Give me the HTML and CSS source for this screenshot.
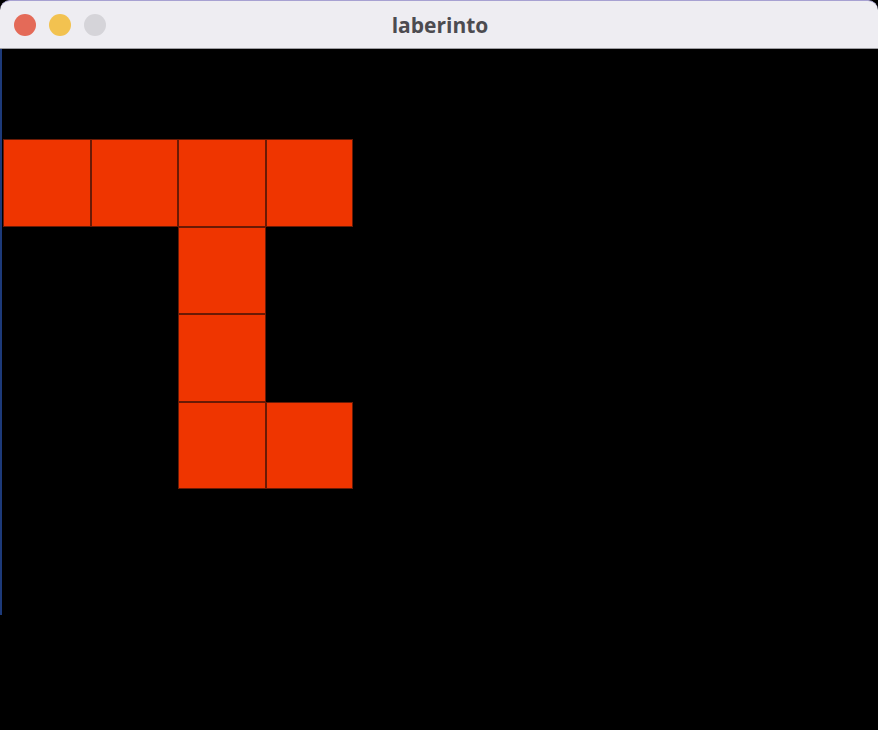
FILE: index.html
```html
<!DOCTYPE html>
<html>
<head>
<meta charset="utf-8">
<title>laberinto</title>
<link rel="stylesheet" href="styles.css">
</head>
<body>
<div class="window">
  <div class="titlebar">
    <div class="lights">
      <span class="light red"></span>
      <span class="light yellow"></span>
      <span class="light gray"></span>
    </div>
    <div class="title">laberinto</div>
  </div>
  <div class="canvas">
    <div class="maze">
      <div class="cell wall"></div><div class="cell wall"></div><div class="cell wall"></div><div class="cell wall"></div>
      <div class="cell"></div><div class="cell"></div><div class="cell wall"></div><div class="cell"></div>
      <div class="cell"></div><div class="cell"></div><div class="cell wall"></div><div class="cell"></div>
      <div class="cell"></div><div class="cell"></div><div class="cell wall"></div><div class="cell wall"></div>
    </div>
  </div>
</div>
</body>
</html>
```
FILE: styles.css
```css
html, body {
  margin: 0;
  padding: 0;
  background: #000;
  width: 878px;
  height: 730px;
  overflow: hidden;
}
.window {
  display: flex;
  flex-direction: column;
  width: 878px;
  height: 730px;
  background: #000;
}
.titlebar {
  position: relative;
  height: 47px;
  flex: none;
  background: #eeedf2;
  border-top: 1px solid #a7a1d2;
  border-bottom: 1px solid #9d9da2;
  border-radius: 10px 10px 0 0;
  display: flex;
  align-items: center;
  justify-content: center;
}
.lights {
  position: absolute;
  left: 14px;
  top: 13px;
  display: flex;
  gap: 13px;
}
.light {
  width: 22px;
  height: 22px;
  border-radius: 50%;
  display: block;
}
.red { background: #e46a58; }
.yellow { background: #f2c250; }
.gray { background: #d5d4d9; }
.title {
  font-family: "Open Sans", "Liberation Sans", sans-serif;
  font-weight: 700;
  font-size: 21px;
  color: #4c4b50;
  margin-left: 2px;
  margin-top: 0;
}
.canvas {
  flex: 1;
  background: linear-gradient(#1d3a7a, #1d3a7a) no-repeat 0 0 / 2px 566px, #000;
  padding-top: 90px;
  padding-left: 3px;
}
.maze {
  display: grid;
  grid-template-columns: repeat(4, 87.5px);
  grid-template-rows: repeat(4, 87.5px);
}
.cell.wall {
  background: #ef3500;
  box-shadow: inset 0 0 0 1px #6a1a05;
}
```
